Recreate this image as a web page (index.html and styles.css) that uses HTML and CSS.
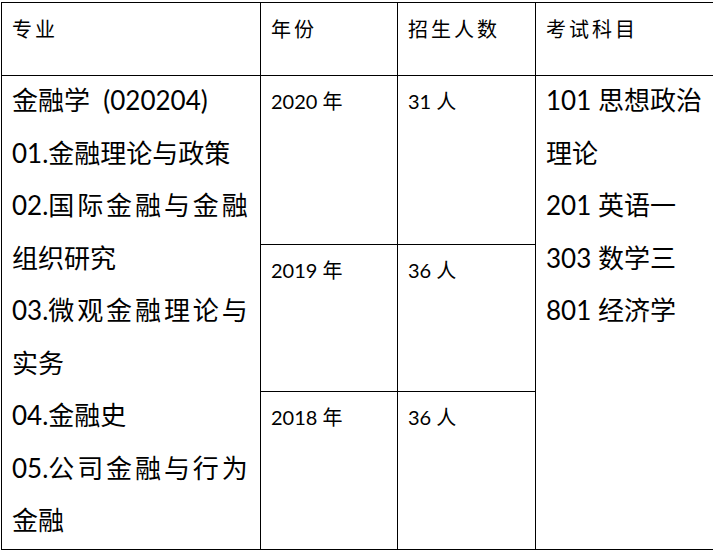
FILE: index.html
```html
<!DOCTYPE html>
<html lang="zh-CN">
<head>
<meta charset="utf-8">
<title>金融学招生信息</title>
<link rel="stylesheet" href="styles.css">
</head>
<body>
<table class="info">
  <colgroup>
    <col class="c-major">
    <col class="c-year">
    <col class="c-count">
    <col class="c-exam">
  </colgroup>
  <thead>
    <tr class="head-row">
      <th>专业</th>
      <th>年份</th>
      <th>招生人数</th>
      <th class="last">考试科目</th>
    </tr>
  </thead>
  <tbody>
    <tr class="r2020">
      <td class="major" rowspan="3">
        <p>金融学&nbsp;&nbsp;(020204)</p>
        <p>01.金融理论与政策</p>
        <p>02.<span class="spread">国际金融与金融</span><br>组织研究</p>
        <p>03.<span class="spread">微观金融理论与</span><br>实务</p>
        <p>04.金融史</p>
        <p>05.<span class="spread">公司金融与行为</span><br>金融</p>
      </td>
      <td class="small">2020 年</td>
      <td class="small">31 人</td>
      <td class="exam last" rowspan="3">
        <p>101 思想政治<br>理论</p>
        <p>201 英语一</p>
        <p>303 数学三</p>
        <p>801 经济学</p>
      </td>
    </tr>
    <tr class="r2019">
      <td class="small">2019 年</td>
      <td class="small">36 人</td>
    </tr>
    <tr class="r2018">
      <td class="small">2018 年</td>
      <td class="small">36 人</td>
    </tr>
  </tbody>
</table>
</body>
</html>
```

FILE: styles.css
```css
html, body {
  margin: 0;
  padding: 0;
  background: #fff;
  overflow: hidden;
}

body {
  padding: 2px 0 0 1px;
  color: #000;
  font-family: "Lato", "Noto Sans CJK SC", sans-serif;
}

.info {
  border-collapse: collapse;
  table-layout: fixed;
  width: 714px;
}

.c-major { width: 259px; }
.c-year { width: 137px; }
.c-count { width: 138px; }
.c-exam { width: 180px; }

.info th,
.info td {
  border: 1px solid #000;
  vertical-align: top;
  text-align: left;
  padding: 0 10px;
}

.info .last {
  border-right: 0;
}

.head-row th {
  height: 71px;
  padding-top: 1px;
  font-family: "Noto Sans CJK SC", sans-serif;
  font-weight: 400;
  font-size: 20px;
  line-height: 50px;
  letter-spacing: 3px;
}

.major,
.exam {
  font-size: 26px;
  line-height: 52.5px;
  white-space: nowrap;
}

.major {
  padding-right: 2px;
}

.spread {
  letter-spacing: 2.9px;
}

.major p,
.exam p {
  margin: 0;
}

.major p:first-child,
.exam p:first-child {
  margin-top: -2px;
}

.small {
  font-size: 20px;
  line-height: 50px;
}

.r2020 td { height: 168px; }
.r2019 td { height: 146px; }
.r2018 td { height: 157px; }
```
